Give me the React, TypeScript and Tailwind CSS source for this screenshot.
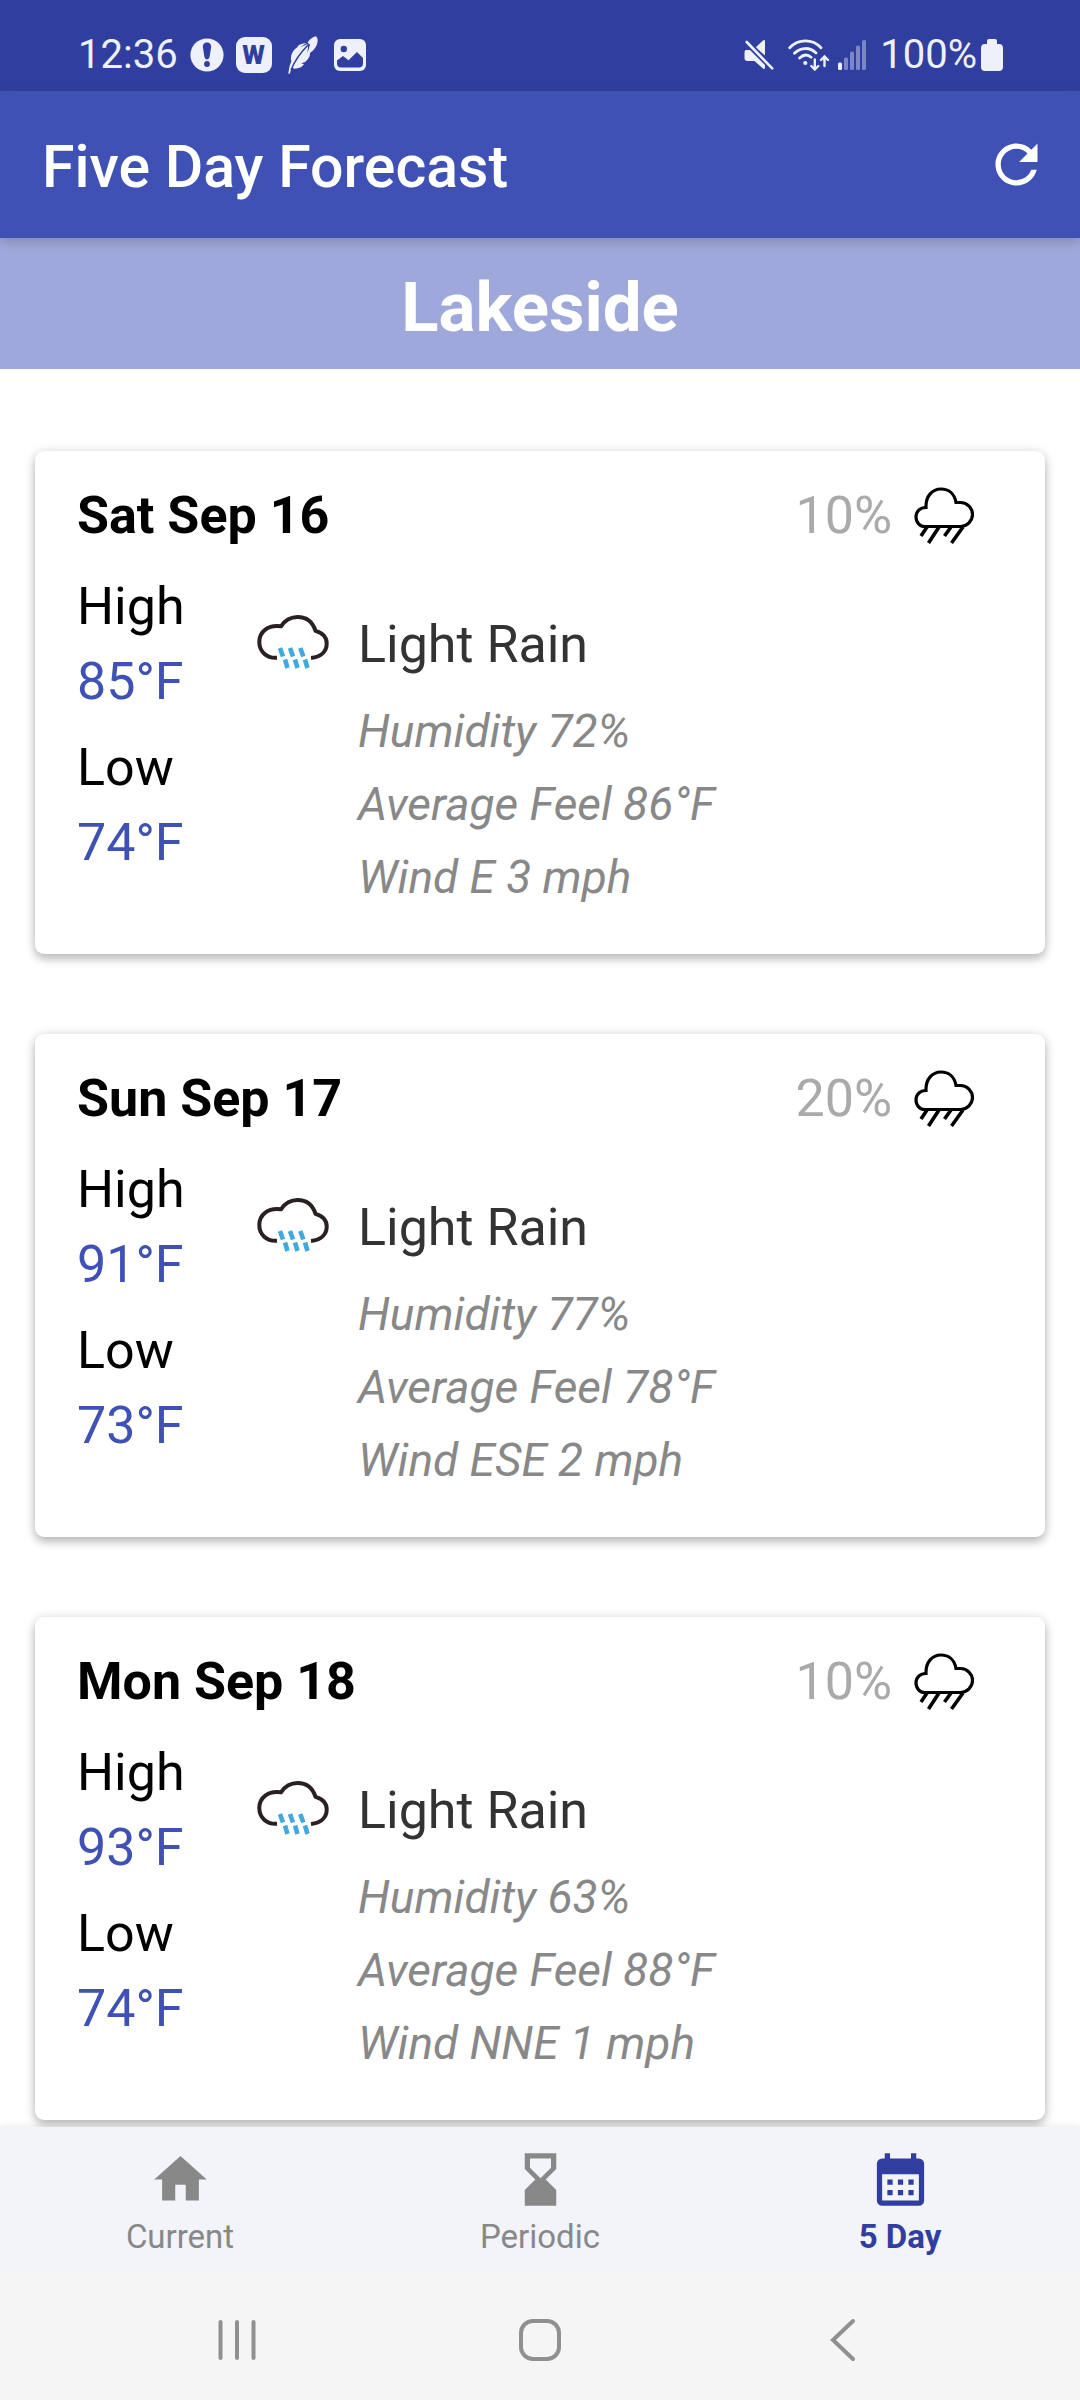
import React from "react";

type Forecast = {
  day: string;
  chance: string;
  high: string;
  low: string;
  summary: string;
  details: string[];
};

const forecasts: Forecast[] = [
  {
    day: "Sat Sep 16",
    chance: "10%",
    high: "85°F",
    low: "74°F",
    summary: "Light Rain",
    details: ["Humidity 72%", "Average Feel 86°F", "Wind E 3 mph"],
  },
  {
    day: "Sun Sep 17",
    chance: "20%",
    high: "91°F",
    low: "73°F",
    summary: "Light Rain",
    details: ["Humidity 77%", "Average Feel 78°F", "Wind ESE 2 mph"],
  },
  {
    day: "Mon Sep 18",
    chance: "10%",
    high: "93°F",
    low: "74°F",
    summary: "Light Rain",
    details: ["Humidity 63%", "Average Feel 88°F", "Wind NNE 1 mph"],
  },
];

function StatusBar() {
  return (
    <div className="flex h-[91px] items-center justify-between bg-[#303f9f] pt-[18px] pr-[77px] pl-[78px] text-[40px] leading-[46px] text-[#eef0fb]">
      <div className="flex items-center gap-3">
        <span>12:36</span>
        <svg aria-hidden="true" className="size-[34px]" viewBox="0 0 34 34">
          <circle cx="17" cy="17" r="16.6" fill="currentColor" />
          <path d="M17 4.6c-2.6 0-4.4 1.9-4.1 4.6l1.5 9.6c.2 1.5 1.2 2.6 2.6 2.6s2.4-1.1 2.6-2.6l1.5-9.6c.3-2.7-1.500-4.600-4.100-4.600z" fill="#303f9f" />
          <circle cx="17" cy="26" r="2.900" fill="#303f9f" />
        </svg>
        <span className="flex size-9 items-center justify-center rounded-[9px] bg-[#eef0fb] text-[26px] leading-9 font-black text-[#303f9f]">
          W
        </span>
        <svg aria-hidden="true" className="ml-1 h-[38px] w-[30px]" viewBox="0 0 30 38">
          <path d="M.3 37.800C1 32.500 1.800 28.500 3.300 25.500 2 19.500 4.500 14.500 9 11.500 10.500 8.300 14.500 7.300 18.500 7L12 11.500l8.300-3.800-.8 9.800L22 8.500 19.500 6.500C22.500 2.500 25.500.8 28 .3c2 1.500 2 4.700 1 8-1.200 3.600-4 6.700-7 8.700.3 3.300-1.800 6.700-5 9l-4 1.500 3 .5c-1.500 3-5 4.500-9.500 4.700L4 31.500c-1 2-1.700 4-2.200 6.300z" fill="currentColor" />
          <path d="M3 34C7 24 13 16 20.500 8.500" fill="none" stroke="#303f9f" strokeWidth="1.500" />
        </svg>
        <svg aria-hidden="true" className="ml-1 size-8" viewBox="0 0 32 32">
          <rect width="32" height="32" rx="6" fill="currentColor" />
          <circle cx="9.800" cy="10" r="3.200" fill="#303f9f" />
          <path d="M3 21.500l6-4.500 5.500 4.200L23 13l6 6v5.500c0 2.500-1.500 4-4 4H7c-2.500 0-4-1.500-4-4z" fill="#303f9f" />
        </svg>
      </div>
      <div className="flex items-center">
        <svg aria-hidden="true" className="h-8 w-[30px]" viewBox="0 0 30 32">
          <path d="M11.500 8.500L19 1.500q2-1.300 2 1v14zM1.500 11H6l15 15v3q-.300 1.800-2 .6L10.500 22h-7Q.5 22 .5 19v-5.500q0-2 1-2.500z" fill="currentColor" />
          <path d="M4.500 1.500l25 26" stroke="#303f9f" strokeWidth="1.500" />
          <path d="M2.700 3l25.500 26.300" stroke="currentColor" strokeWidth="2.600" strokeLinecap="round" />
        </svg>
        <svg aria-hidden="true" className="ml-[14px] h-8 w-[42px]" viewBox="0 0 42 32" fill="none" stroke="currentColor" strokeWidth="2.800" strokeLinecap="round">
          <path d="M1.700 8.700C10.500-.5 24.500-.5 33 8.700M6.500 14.200c6.500-6.200 15.500-6.200 21.500-.2M11.600 19c4-3.600 8.300-3.500 11.500-.8" />
          <circle cx="17.300" cy="24" r="2.100" fill="currentColor" stroke="none" />
          <path d="M26.800 20.500v9.500M23.300 27l3.500 3.500 3.500-3.500M36.500 27v-9.500M33 21l3.500-3.500L40 21" strokeWidth="2.400" />
        </svg>
        <svg aria-hidden="true" className="ml-2 h-[30px] w-7" viewBox="0 0 28 30" fill="currentColor">
          <rect y="22.500" width="4" height="7.500" rx="1.500" />
          <g opacity=".4">
            <rect x="6" y="17.500" width="4" height="12.500" rx="1.500" />
            <rect x="12" y="11.500" width="4" height="18.500" rx="1.500" />
            <rect x="18" y="5.500" width="4" height="24.500" rx="1.500" />
            <rect x="24" width="4" height="30" rx="1.500" />
          </g>
        </svg>
        <span className="ml-[14px]">100%</span>
        <svg aria-hidden="true" className="ml-1 h-8 w-[22px]" viewBox="0 0 22 32" fill="currentColor">
          <path d="M6 5V2q0-2 2-2h6q2 0 2 2v3h2q4 0 4 4v19q0 4-4 4H4q-4 0-4-4V9q0-4 4-4z" />
        </svg>
      </div>
    </div>
  );
}

function ShowerIcon() {
  return (
    <svg aria-hidden="true" className="h-[58px] w-[60px]" viewBox="0 0 60 58" fill="none" stroke="#000" strokeWidth="3.200">
      <path d="M11 39.500h35.500a11.900 11.900 0 0 0 0-24H42C40.500 6.500 34.500 2 27 2 18 2 11.500 9.500 12 20.500 6 20.500 2 24.500 2 30c0 5.500 4 9.500 9 9.500z" />
      <path d="M13 40L7 49M25 40L14.500 56M37 40l-6.500 9M49 40L37.500 56" strokeWidth="3.600" />
    </svg>
  );
}

function LightRainIcon() {
  return (
    <svg aria-hidden="true" className="h-[54px] w-[72px]" viewBox="0 0 72 54" fill="none">
      <path d="M20 42.800C9.500 43.500 2.300 36.500 2.300 27 2.300 16.500 11 9.500 24 11.300 28.500 4.800 34.500 2.100 40.500 2.100 49 2.100 55.500 6.800 58.500 15.800 65.500 17.800 69.700 22.500 69.700 28.500 69.700 36.500 64 42 54 43" stroke="#2b2021" strokeWidth="4" strokeLinejoin="round" />
      <path d="M23 33l3 8.500M33 33l3 8.500M43.300 33l3 8.500M28 44.500l2.500 8.500M38 44.500l2.500 8.500M48 44.500l2.500 8.500" stroke="#42a9dc" strokeWidth="4.600" />
    </svg>
  );
}

function ForecastCard({ forecast }: { forecast: Forecast }) {
  return (
    <article className="rounded-[9px] bg-white pt-[35px] pr-[71px] pb-[50px] pl-[42px] shadow-[0_5px_10px_rgba(0,0,0,0.24),0_0_12px_rgba(0,0,0,0.10)]">
      <header className="flex items-center justify-between">
        <h2 className="font-bold text-black">{forecast.day}</h2>
        <div className="flex items-center gap-[22px] text-[#aaaaaa]">
          <span>{forecast.chance}</span>
          <ShowerIcon />
        </div>
      </header>
      <div className="mt-[31px] flex items-start">
        <dl className="w-[180px] text-black">
          <dt>High</dt>
          <dd className="mt-[15px] text-[#3f51b5]">{forecast.high}</dd>
          <dt className="mt-[26px]">Low</dt>
          <dd className="mt-[15px] text-[#3f51b5]">{forecast.low}</dd>
        </dl>
        <div className="w-[101px] pt-[38px]">
          <LightRainIcon />
        </div>
        <div className="pt-[38px]">
          <p className="text-[#333333]">{forecast.summary}</p>
          <div className="mt-[29px] flex flex-col gap-[19px] text-[46px] leading-[54px] text-[#888888] italic">
            {forecast.details.map((line) => (
              <p key={line}>{line}</p>
            ))}
          </div>
        </div>
      </div>
    </article>
  );
}

const tabs = [
  { label: "Current", active: false, path: "M10 20v-6h4v6h5v-8h3L12 3 2 12h3v8z" },
  {
    label: "Periodic",
    active: false,
    path: "M18 22l-.01-6L14 12l3.990-4.010L18 2H6v6l4 4-4 3.990V22h12zM8 7.500V4h8v3.500l-4 4-4-4z",
  },
  {
    label: "5 Day",
    active: true,
    path: "M19 4h-1V2h-2v2H8V2H6v2H5a2 2 0 0 0-2 2v14a2 2 0 0 0 2 2h14a2 2 0 0 0 2-2V6a2 2 0 0 0-2-2zm0 16H5V10h14v10zM9 14H7v-2h2v2zm4 0h-2v-2h2v2zm4 0h-2v-2h2v2zm-8 4H7v-2h2v2zm4 0h-2v-2h2v2zm4 0h-2v-2h2v2z",
  },
];

function TabBar() {
  return (
    <nav className="relative grid grid-cols-3 bg-[#f2f4f9] shadow-[0_0_8px_rgba(0,0,0,0.10)]">
      {tabs.map((tab) => (
        <button
          key={tab.label}
          type="button"
          aria-current={tab.active ? "page" : undefined}
          className={
            tab.active
              ? "flex flex-col items-center gap-[7px] pt-[21px] pb-[17px] font-bold text-[#303f9f]"
              : "flex flex-col items-center gap-[7px] pt-[21px] pb-[17px] text-[#888888]"
          }
        >
          <svg aria-hidden="true" className="size-[63px]" viewBox="0 0 24 24" fill="currentColor" fillRule="evenodd">
            <path d={tab.path} />
          </svg>
          <span className="text-[33px] leading-[38px]">{tab.label}</span>
        </button>
      ))}
    </nav>
  );
}

function SystemNavigation() {
  return (
    <div className="relative grid grid-cols-3 bg-[#f5f5f5] px-[86px] pt-[45px] pb-[38px] text-[#909090]">
      <button type="button" aria-label="Recent apps" className="flex justify-center">
        <svg className="size-11" viewBox="0 0 44 44" stroke="currentColor" strokeWidth="4" strokeLinecap="round">
          <path d="M5.500 4v36M22 4v36M38.500 4v36" />
        </svg>
      </button>
      <button type="button" aria-label="Home" className="flex justify-center">
        <svg className="size-11" viewBox="0 0 44 44" fill="none" stroke="currentColor" strokeWidth="4">
          <rect x="3" y="3" width="38" height="38" rx="12" />
        </svg>
      </button>
      <button type="button" aria-label="Back" className="flex justify-center">
        <svg className="size-11" viewBox="0 0 44 44" fill="none" stroke="currentColor" strokeWidth="4" strokeLinecap="round">
          <path d="M32 3L12 22l20 19" />
        </svg>
      </button>
    </div>
  );
}

export default function App() {
  return (
    <div className="flex min-h-screen flex-col bg-white font-[Roboto,sans-serif] text-[52px] leading-[60px]">
      <StatusBar />
      <header className="relative flex h-[147px] items-center justify-between bg-[#3f51b5] pr-[32px] pl-[42px] text-white shadow-[0_4px_10px_rgba(0,0,0,0.18)]">
        <h1 className="pt-1 text-[59px] leading-[68px] font-medium">Five Day Forecast</h1>
        <button type="button" aria-label="Refresh" className="size-[63px]">
          <svg className="size-full" viewBox="0 0 24 24" fill="currentColor">
            <path d="M17.650 6.350A7.958 7.958 0 0 0 12 4c-4.420 0-7.990 3.580-7.990 8s3.570 8 7.990 8c3.730 0 6.840-2.550 7.730-6h-2.080A5.990 5.990 0 0 1 12 18c-3.310 0-6-2.690-6-6s2.690-6 6-6c1.660 0 3.140.69 4.220 1.780L13 11h7V4l-2.350 2.350z" />
          </svg>
        </button>
      </header>
      <div className="bg-[#9fa8da] pt-[30px] pb-[21px] text-center text-[69px] leading-[80px] font-bold text-white">
        Lakeside
      </div>
      <main className="flex flex-1 flex-col gap-20 overflow-hidden px-[35px] pt-[82px] pb-[7px]">
        {forecasts.map((forecast) => (
          <ForecastCard key={forecast.day} forecast={forecast} />
        ))}
      </main>
      <TabBar />
      <SystemNavigation />
    </div>
  );
}
